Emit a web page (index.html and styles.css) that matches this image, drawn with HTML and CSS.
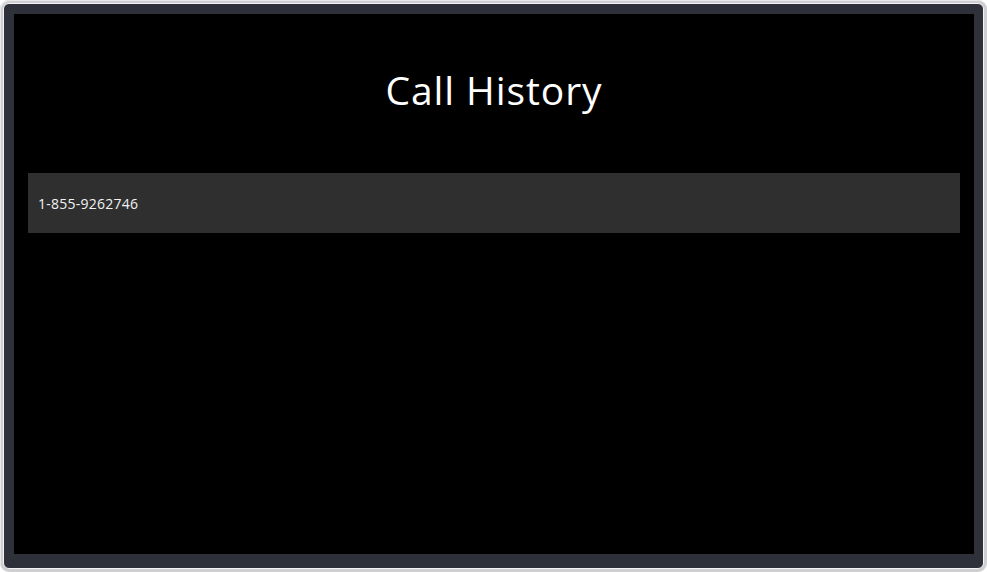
FILE: index.html
```html
<!DOCTYPE html>
<html>
<head>
<meta charset="utf-8">
<link rel="stylesheet" href="styles.css">
</head>
<body>
<div class="bezel">
  <div class="frame">
    <div class="screen">
      <h1 class="title">Call History</h1>
      <ul class="calls">
        <li class="call">1-855-9262746</li>
      </ul>
    </div>
  </div>
</div>
</body>
</html>
```
FILE: styles.css
```css
html, body {
  margin: 0;
  padding: 0;
  background: #ffffff;
  width: 987px;
  height: 572px;
  overflow: hidden;
}
.bezel {
  box-sizing: border-box;
  width: 987px;
  height: 572px;
  background: #cfcfd1;
  border-radius: 9px;
  padding: 3px;
  box-shadow: inset 1px 1px 0 #e8e8ea;
}
.frame {
  box-sizing: border-box;
  width: 100%;
  height: 100%;
  background: #2e3139;
  border-radius: 6px;
  padding: 10px 9px 14px 10px;
  border: 1px solid #f4f4f4;
}
.screen {
  box-sizing: border-box;
  width: 960px;
  height: 540px;
  background: #000000;
  padding: 0 14px;
  font-family: "Open Sans", "Noto Sans", sans-serif;
  color: #ffffff;
}
.title {
  margin: 0;
  padding-top: 50px;
  height: 111px;
  box-sizing: border-box;
  text-align: center;
  font-weight: 400;
  font-size: 39px;
  line-height: 52px;
  letter-spacing: 0.9px;
}
.calls {
  list-style: none;
  margin: 48px 0 0 0;
  padding: 0;
}
.call {
  height: 60px;
  background: #2f2f2f;
  padding-left: 10px;
  display: flex;
  align-items: center;
  font-size: 14px;
  letter-spacing: 0.25px;
  color: #f2f2f2;
}
```
